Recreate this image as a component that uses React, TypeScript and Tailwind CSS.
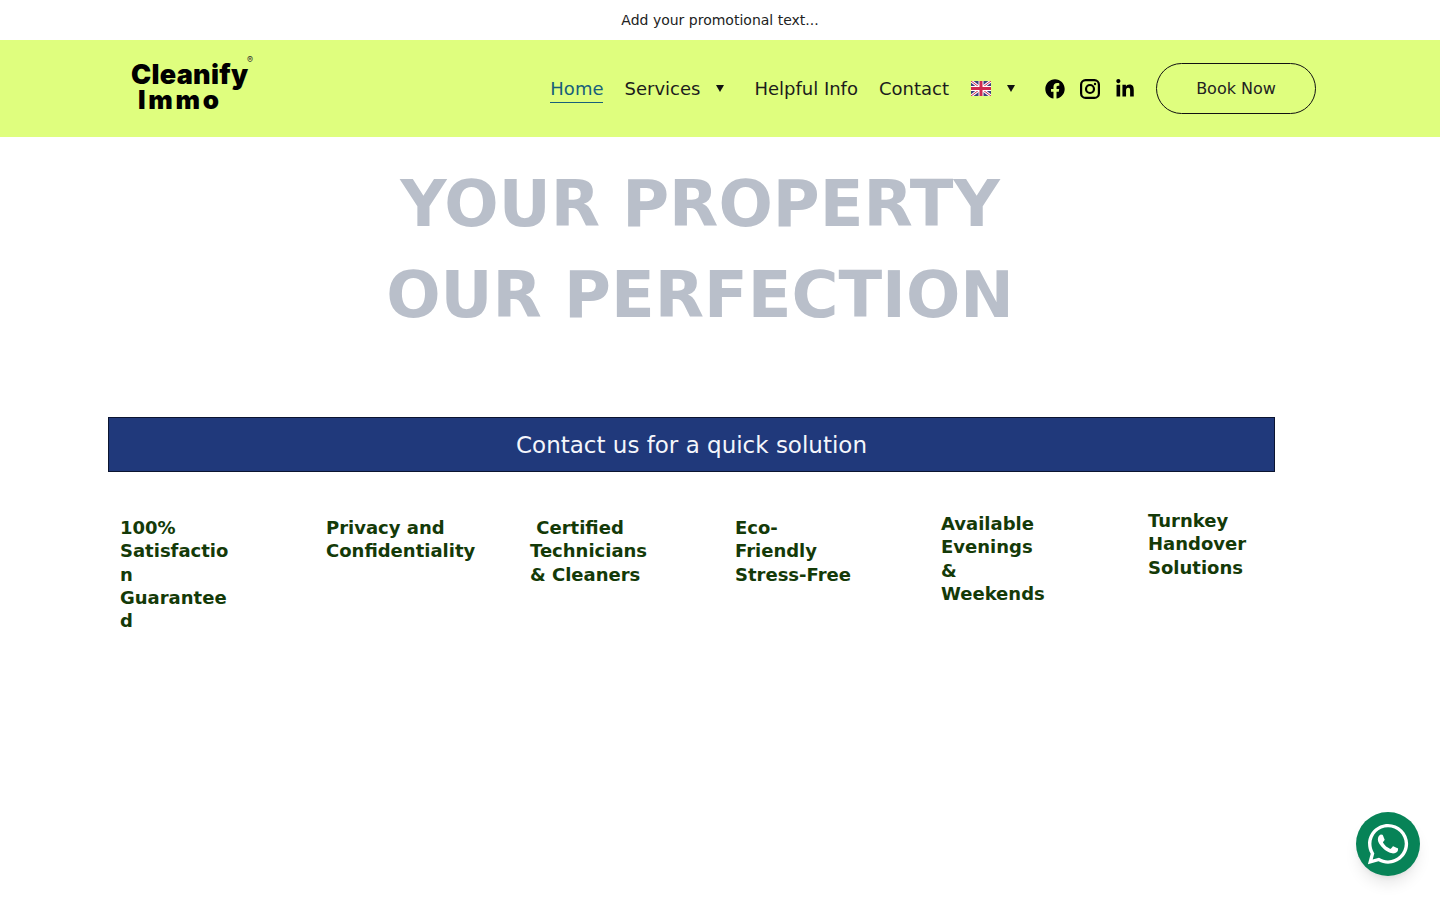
import { FaFacebook, FaLinkedinIn, FaWhatsapp } from "react-icons/fa";

const FEATURES = [
  { lines: ["100%", "Satisfactio", "n", "Guarantee", "d"], box: "w-[205px] pl-3 pt-[44px]" },
  { lines: ["Privacy and", "Confidentiality"], box: "w-[205px] pl-[13px] pt-[44px]" },
  { lines: ["\u00A0Certified", "Technicians", "& Cleaners"], box: "w-[205px] pl-[12px] pt-[44px]" },
  { lines: ["Eco-", "Friendly", "Stress-Free"], box: "w-[206px] pl-[12px] pt-[44px]" },
  { lines: ["Available", "Evenings", "&", "Weekends"], box: "w-[207px] pl-[12px] pt-[40px]" },
  { lines: ["Turnkey", "Handover", "Solutions"], box: "w-[200px] pl-[12px] pt-[37px]" },
];

function Caret() {
  return <span className="inline-block w-0 h-0 border-x-[4px] border-x-transparent border-t-[7px] border-t-[#111]" />;
}

function UkFlag() {
  return (
    <svg width="20" height="15" viewBox="0 0 60 45">
      <rect width="60" height="45" fill="#3b3f7c" />
      <path d="M0 0L60 45M60 0L0 45" stroke="#fff" strokeWidth="9" />
      <path d="M0 0L60 45M60 0L0 45" stroke="#cf2a4e" strokeWidth="3" />
      <path d="M30 0V45M0 22.500H60" stroke="#fff" strokeWidth="15" />
      <path d="M30 0V45M0 22.500H60" stroke="#cf2a4e" strokeWidth="9" />
    </svg>
  );
}

function InstagramIcon() {
  return (
    <svg width="20" height="20" viewBox="0 0 20 20" fill="none" stroke="#000" strokeWidth="2.200">
      <rect x="1.100" y="1.100" width="17.800" height="17.800" rx="4.500" />
      <circle cx="10" cy="10" r="4" />
      <circle cx="15" cy="5" r="1.200" fill="#000" stroke="none" />
    </svg>
  );
}

export default function App() {
  return (
    <div className="relative min-h-[900px] bg-white overflow-hidden" style={{ fontFamily: '"DejaVu Sans", sans-serif' }}>
      {/* Promo bar */}
      <div className="h-10 flex items-center justify-center text-sm text-[#222]">Add your promotional text...</div>

      {/* Header */}
      <header className="h-[97px] bg-[#dffe7e] flex items-center pl-[131px] pr-[124px]">
        <div className="relative w-[125px] -mt-[5px] text-black font-black" style={{ fontFamily: "Inter, sans-serif" }}>
          <div className="text-[27px] leading-[26px] tracking-[0.3px]">Cleanify</div>
          <div className="text-[26px] leading-[23px] tracking-[2.700px] pl-[7px]">Immo</div>
          <span className="absolute -top-[7px] right-[3px] text-[9px] font-normal leading-none text-[#333]">®</span>
        </div>

        <nav className="ml-auto flex items-center text-lg text-[#1c1c1c]">
          <a className="text-[#17607a] border-b border-[#17607a] leading-[26px] mt-[2px]">Home</a>
          <a className="ml-[21px]">Services</a>
          <span className="ml-[16px] flex"><Caret /></span>
          <a className="ml-[30px]">Helpful Info</a>
          <a className="ml-[21px]">Contact</a>
          <span className="ml-[22px] flex"><UkFlag /></span>
          <span className="ml-[16px] flex"><Caret /></span>
        </nav>

        <div className="ml-[30px] flex items-center gap-[15px] text-black">
          <FaFacebook className="w-5 h-5" />
          <InstagramIcon />
          <FaLinkedinIn className="w-5 h-5" />
        </div>

        <button className="ml-[21px] w-[160px] h-[51px] rounded-full border border-[#111] text-base text-[#222]">Book Now</button>
      </header>

      {/* Hero */}
      <div className="w-[1400px] pt-[22px] text-center font-bold text-[64px] leading-[91px] text-[#b9bfca]">
        <h1>YOUR PROPERTY</h1>
        <h1>OUR PERFECTION</h1>
      </div>

      <main className="pl-[108px] pt-[76px]">
        <button className="w-[1167px] h-[55px] pt-[2px] bg-[#20397b] border border-[#0b1430] text-[23px] text-[#f4f6fb]">
          Contact us for a quick solution
        </button>

        <div className="flex">
          {FEATURES.map((f) => (
            <div key={f.lines.join(" ")} className={f.box}>
              <p className="font-bold text-lg leading-[23.250px] text-[#143a08] whitespace-nowrap">
                {f.lines.map((line) => (
                  <span key={line} className="block">{line}</span>
                ))}
              </p>
            </div>
          ))}
        </div>
      </main>

      {/* WhatsApp float */}
      <a className="absolute right-5 bottom-6 w-16 h-16 rounded-full bg-[#078357] flex items-center justify-center text-white shadow-lg">
        <FaWhatsapp className="w-[46px] h-[46px]" />
      </a>
    </div>
  );
}
